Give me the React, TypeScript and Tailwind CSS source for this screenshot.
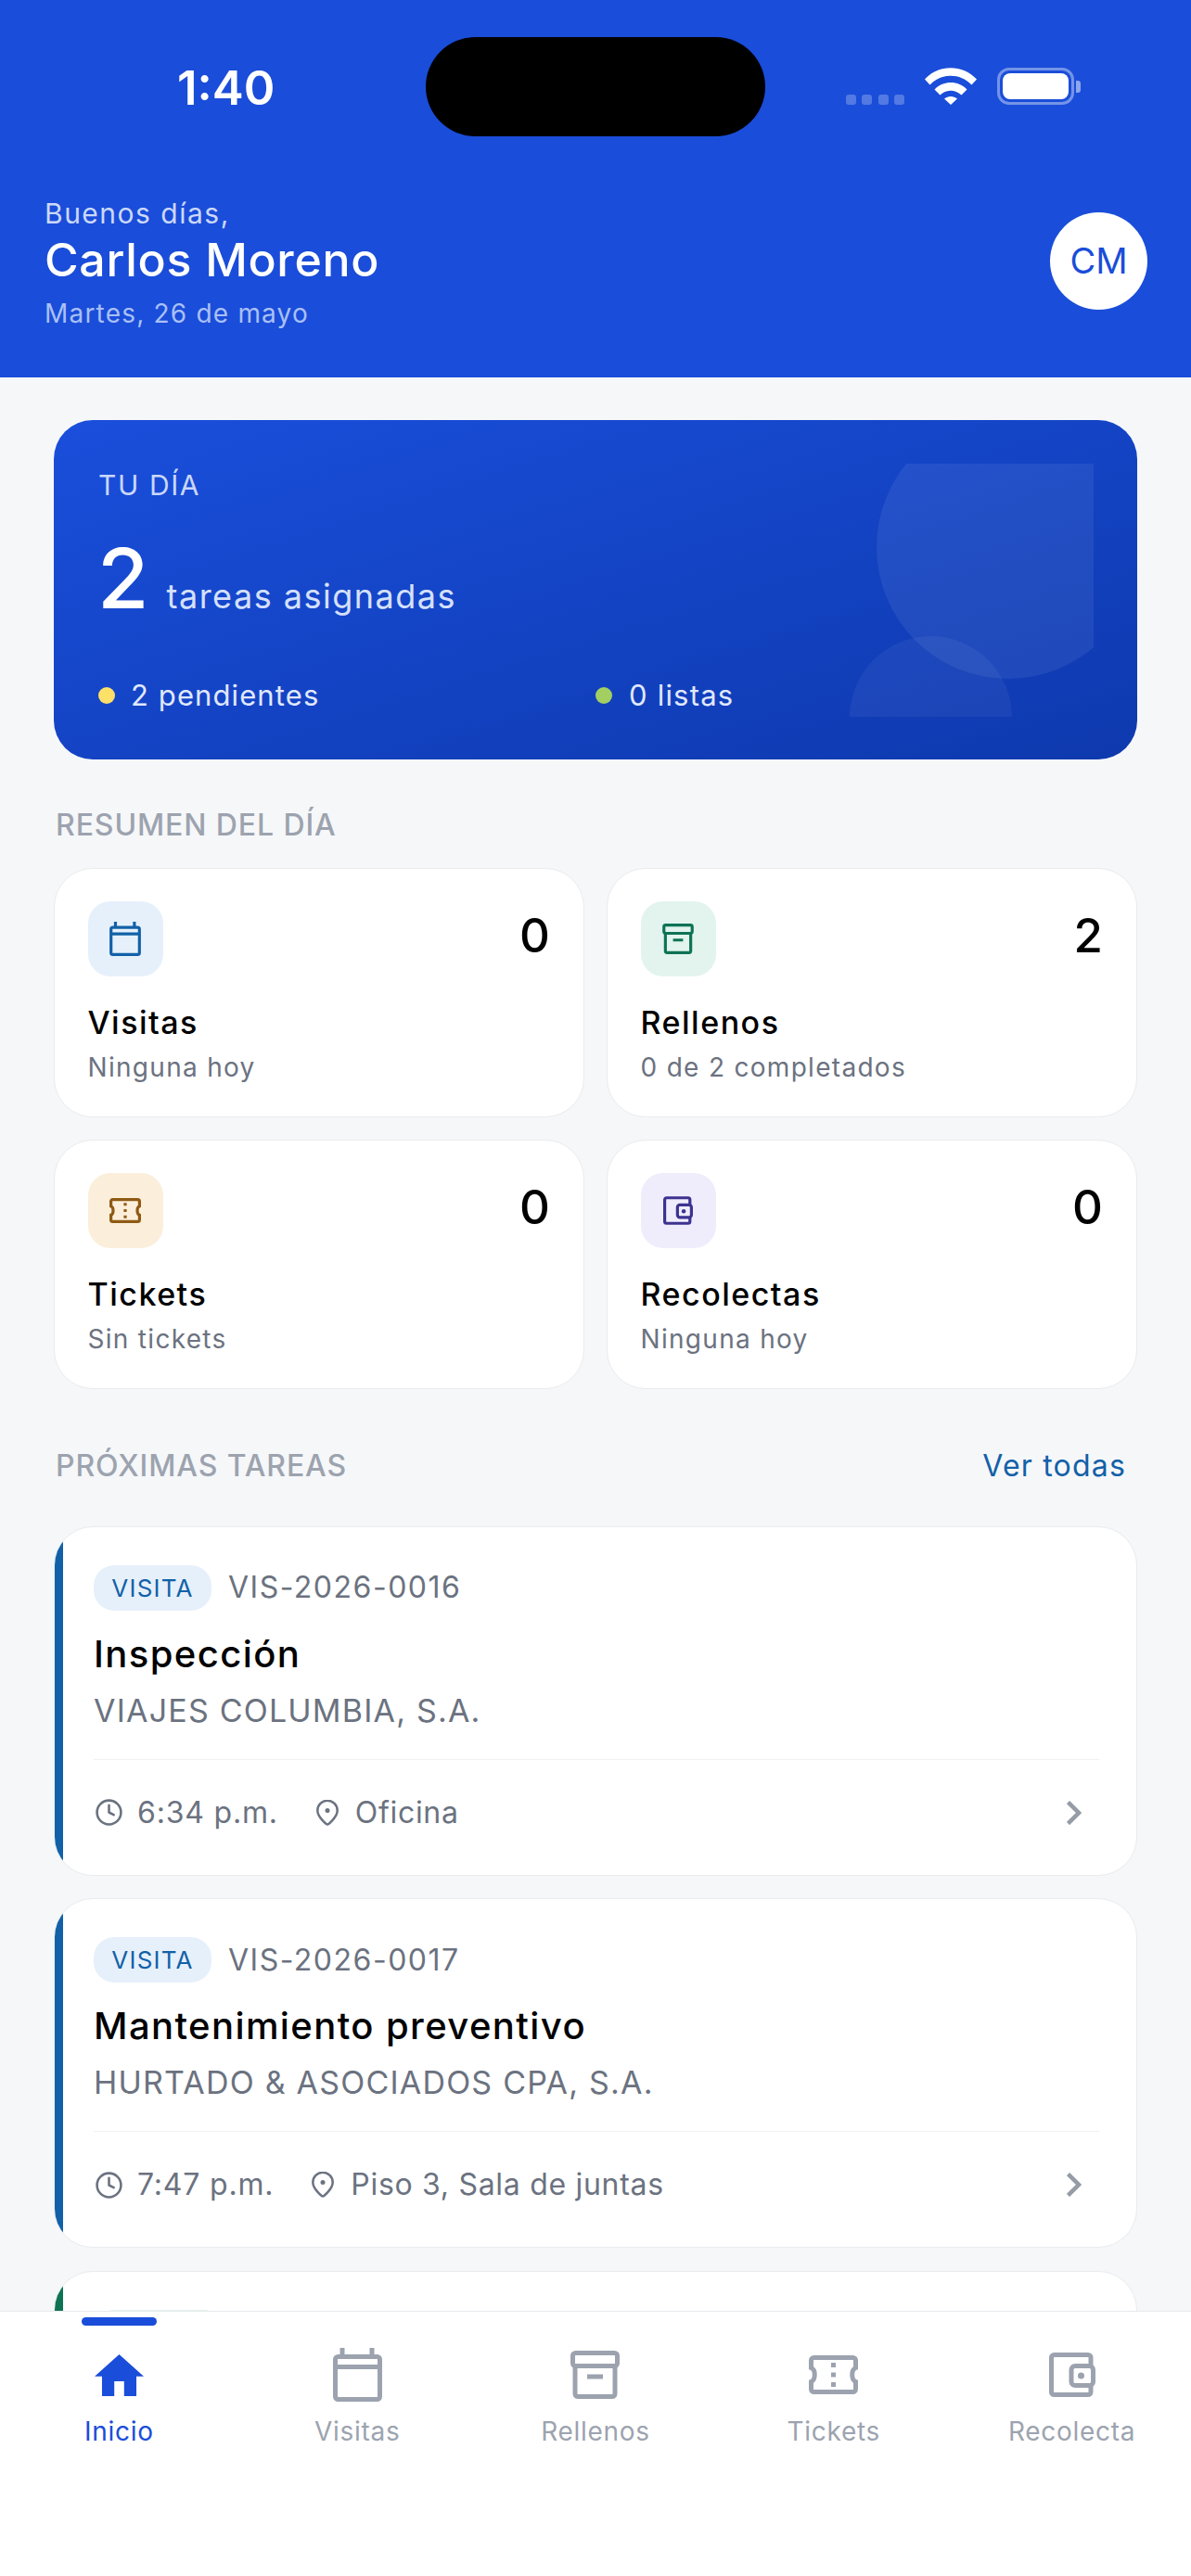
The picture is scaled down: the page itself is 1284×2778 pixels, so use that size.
import { Clock } from "lucide-react";

type IconProps = { className?: string };

function CalendarIcon({ className }: IconProps) {
  return (
    <svg viewBox="0 0 53 58" fill="none" stroke="currentColor" strokeWidth="5" className={className}>
      <rect x="2.5" y="9.5" width="48" height="46" rx="3" />
      <path d="M2.5 20.5h48M10 0v9M42 0v9" />
    </svg>
  );
}

function ArchiveIcon({ className }: IconProps) {
  return (
    <svg viewBox="0 0 53 52" fill="none" stroke="currentColor" strokeWidth="5" className={className}>
      <rect x="2.5" y="2.5" width="48" height="14" rx="3" />
      <path d="M5 16v30.5a3 3 0 0 0 3 3h37a3 3 0 0 0 3-3V16M18 28h17" />
    </svg>
  );
}

function TicketIcon({ className }: IconProps) {
  return (
    <svg viewBox="0 0 53 42" fill="none" stroke="currentColor" strokeWidth="5" className={className}>
      <path d="M5.5 2.5h42a3 3 0 0 1 3 3v8c-5 2-5 13 0 15v8a3 3 0 0 1-3 3h-42a3 3 0 0 1-3-3v-8c5-2 5-13 0-15v-8a3 3 0 0 1 3-3Z" />
      <path d="M26.5 8v5M26.5 18.5v5M26.5 29v5" />
    </svg>
  );
}

function WalletIcon({ className }: IconProps) {
  return (
    <svg viewBox="0 0 50 48" fill="none" stroke="currentColor" strokeWidth="5" className={className}>
      <path d="M45 14V5.500a3 3 0 0 0-3-3H5.500a3 3 0 0 0-3 3v37a3 3 0 0 0 3 3H42a3 3 0 0 0 3-3V36" />
      <rect x="24" y="14.500" width="23.500" height="21" rx="4" />
      <circle cx="34.500" cy="25" r="3.500" fill="currentColor" stroke="none" />
    </svg>
  );
}

function HomeIcon({ className }: IconProps) {
  return (
    <svg viewBox="2 3 20 17" fill="currentColor" className={className}>
      <path d="M10 20v-6h4v6h5v-8h3L12 3 2 12h3v8z" />
    </svg>
  );
}

function PinIcon({ className }: IconProps) {
  return (
    <svg viewBox="0 0 24 28" fill="none" stroke="currentColor" strokeWidth="2.500" className={className}>
      <path d="M12 26.500c-1 0-10.700-8-10.700-15a10.700 10.700 0 0 1 21.400 0c0 7-9.700 15-10.700 15Z" strokeLinejoin="round" />
      <circle cx="12" cy="11.500" r="2.500" fill="currentColor" stroke="none" />
    </svg>
  );
}

function ChevronIcon({ className }: IconProps) {
  return (
    <svg viewBox="0 0 16 26" fill="none" stroke="currentColor" strokeWidth="4.500" className={className}>
      <path d="M1.500 1.500L13 13L1.500 24.500" />
    </svg>
  );
}

const stats = [
  {
    title: "Visitas",
    note: "Ninguna hoy",
    count: 0,
    tile: "bg-[#e6f0fb] text-[#1261a8]",
    icon: <CalendarIcon className="w-[34px] h-[37px]" />,
  },
  {
    title: "Rellenos",
    note: "0 de 2 completados",
    count: 2,
    tile: "bg-[#e2f4ed] text-[#0e7355]",
    icon: <ArchiveIcon className="w-[34px] h-[33px]" />,
  },
  {
    title: "Tickets",
    note: "Sin tickets",
    count: 0,
    tile: "bg-[#fbefdc] text-[#8f5a14]",
    icon: <TicketIcon className="w-[34px] h-[27px]" />,
  },
  {
    title: "Recolectas",
    note: "Ninguna hoy",
    count: 0,
    tile: "bg-[#efedfc] text-[#3d3390]",
    icon: <WalletIcon className="w-[32px] h-[31px]" />,
  },
];

const tasks = [
  {
    code: "VIS-2026-0016",
    title: "Inspección",
    client: "VIAJES COLUMBIA, S.A.",
    time: "6:34 p.m.",
    place: "Oficina",
  },
  {
    code: "VIS-2026-0017",
    title: "Mantenimiento preventivo",
    client: "HURTADO & ASOCIADOS CPA, S.A.",
    time: "7:47 p.m.",
    place: "Piso 3, Sala de juntas",
  },
];

const tabs = [
  { label: "Inicio", active: true, icon: <HomeIcon className="w-[53px] h-[45px]" /> },
  { label: "Visitas", active: false, icon: <CalendarIcon className="w-[53px] h-[58px]" /> },
  { label: "Rellenos", active: false, icon: <ArchiveIcon className="w-[53px] h-[52px]" /> },
  { label: "Tickets", active: false, icon: <TicketIcon className="w-[53px] h-[42px]" /> },
  { label: "Recolecta", active: false, icon: <WalletIcon className="w-[50px] h-[48px]" /> },
];

function StatusBar() {
  return (
    <div className="h-[212px] flex justify-between items-start pl-[191px] pr-[119px] pt-[68px] shrink-0">
      <span className="text-[51px] leading-[54px] font-semibold text-white">1:40</span>
      {/* Dynamic island */}
      <div className="absolute left-[459px] top-[40px] w-[366px] h-[107px] rounded-[54px] bg-black" />
      <div className="flex items-end pt-[5px]">
        <div className="flex gap-[6.500px] mr-[22px]">
          <span className="w-[11px] h-[11px] rounded-[3px] bg-white/25" />
          <span className="w-[11px] h-[11px] rounded-[3px] bg-white/25" />
          <span className="w-[11px] h-[11px] rounded-[3px] bg-white/25" />
          <span className="w-[11px] h-[11px] rounded-[3px] bg-white/25" />
        </div>
        <svg viewBox="0 0 56 40" fill="white" className="w-[56px] h-[40px] mr-[22px]">
          <path d="M0 12.500C15-4 41-4 56 12.500L50.500 18.500C38 5.500 18 5.500 5.500 18.500Z" />
          <path d="M10.500 23.500C19.500 13.500 36.500 13.500 45.500 23.500L39.500 29.500C32.500 23 23.500 23 16.500 29.500Z" />
          <path d="M21 33.500C25 30 31 30 35 33.500L28 40Z" />
        </svg>
        <div className="flex items-center">
          <div className="w-[83px] h-[40px] rounded-[13px] border-[3px] border-white/40 p-[3px]">
            <div className="w-full h-full rounded-[8px] bg-white" />
          </div>
          <div className="w-[5px] h-[13px] ml-[2px] rounded-r-[3px] bg-white/50" />
        </div>
      </div>
    </div>
  );
}

function HeroCard() {
  return (
    <section className="relative h-[366px] rounded-[42px] bg-gradient-to-br from-[#1a4fdc] to-[#0e39ae] px-[48px] pt-[52px] overflow-hidden">
      <svg viewBox="0 0 263 273" className="absolute top-[47px] right-[47px] w-[263px] h-[273px]" fill="white">
        <circle cx="171" cy="90" r="142" fillOpacity="0.07" />
        <circle cx="87.500" cy="273.500" r="87.500" fillOpacity="0.05" />
      </svg>
      <div className="relative">
        <p className="text-[30px] leading-[36px] text-[#c9d7fa] tracking-[1.600px]">TU DÍA</p>
        <div className="flex items-baseline gap-[19px] mt-[38px] h-[90px]">
          <span className="-ml-[1px] text-[90px] leading-[90px] font-[450] text-white">2</span>
          <span className="text-[36px] leading-[44px] text-[#d5e0fb] tracking-[1.500px]">tareas asignadas</span>
        </div>
        <div className="grid grid-cols-2 mt-[63px]">
          <div className="flex items-center gap-[17px]">
            <span className="w-[18px] h-[18px] rounded-full bg-[#fde068]" />
            <span className="text-[31px] leading-[36px] text-[#e0e8fd] tracking-[1.100px]">2 pendientes</span>
          </div>
          <div className="flex items-center gap-[18px]">
            <span className="w-[18px] h-[18px] rounded-full bg-[#a3cf62]" />
            <span className="text-[31px] leading-[36px] text-[#e0e8fd] tracking-[1.200px]">0 listas</span>
          </div>
        </div>
      </div>
    </section>
  );
}

function TaskCard({ code, title, client, time, place }: (typeof tasks)[number]) {
  return (
    <article className="h-[377px] shrink-0 flex rounded-[42px] overflow-hidden bg-white border-[1.500px] border-[#e9ebee]">
      <div className="w-[9px] shrink-0 bg-[#1261a8]" />
      <div className="flex-1 min-w-0 pl-[33px] pr-[40px] pt-[41px]">
        <div className="flex items-center gap-[18px]">
          <span className="h-[49px] w-[127px] flex items-center justify-center rounded-[22px] bg-[#e6f0fb] text-[26px] text-[#1261a8] tracking-[1.200px]">
            VISITA
          </span>
          <span className="text-[32px] leading-[44px] text-[#6b7280] tracking-[1.500px]">{code}</span>
        </div>
        <h3 className="mt-[21px] text-[40px] leading-[52px] font-[450] text-black tracking-[1.400px]">{title}</h3>
        <p className="mt-[13px] text-[34px] leading-[44px] text-[#6b7280] tracking-[1.200px]">{client}</p>
        <div className="mt-[30px] border-t-[1.500px] border-[#f0f1f3] pt-[35px] flex items-center">
          <Clock className="ml-[1px] w-[31px] h-[31px] text-[#6b7280] shrink-0" strokeWidth={2} />
          <span className="ml-[15px] text-[32px] leading-[44px] text-[#6b7280] tracking-[0.800px]">{time}</span>
          <PinIcon className="ml-[41px] w-[24px] h-[28px] text-[#6b7280] shrink-0" />
          <span className="ml-[18px] text-[32px] leading-[44px] text-[#6b7280] tracking-[0.700px]">{place}</span>
          <ChevronIcon className="ml-auto mr-[19px] w-[16px] h-[26px] text-[#969ca5]" />
        </div>
      </div>
    </article>
  );
}

export default function App() {
  return (
    <div className="w-[1284px] h-[2778px] flex flex-col overflow-hidden bg-[#f6f7f9] font-['Inter',sans-serif]">
      {/* Header */}
      <header className="relative h-[407px] shrink-0 bg-[#1a4dd9]">
        <StatusBar />
        <div className="flex justify-between items-start pl-[48px] pr-[47px]">
          <div>
            <p className="text-[30px] leading-[36px] text-[#cbd8fa] tracking-[1.500px]">Buenos días,</p>
            <h1 className="mt-[2px] text-[50px] leading-[60px] font-[450] text-white tracking-[0.700px]">Carlos Moreno</h1>
            <p className="mt-[10px] text-[28px] leading-[36px] text-[#a9c0f7] tracking-[1.200px]">Martes, 26 de mayo</p>
          </div>
          <div className="mt-[17px] w-[105px] h-[105px] rounded-full bg-white flex items-center justify-center text-[38px] text-[#1a4dd9]">
            CM
          </div>
        </div>
      </header>

      {/* Content */}
      <main className="flex-1 min-h-0 overflow-hidden px-[58px] pt-[46px]">
        <HeroCard />

        <h2 className="mt-[56px] mb-[31px] pl-[2px] text-[32px] leading-[30px] font-[450] text-[#9ca3af] tracking-[0.900px]">
          RESUMEN DEL DÍA
        </h2>
        <div className="grid grid-cols-2 gap-x-[24px] gap-y-[24px]">
          {stats.map((stat) => (
            <div
              key={stat.title}
              className="h-[269px] rounded-[42px] bg-white border-[1.500px] border-[#e9ebee] pl-[35.500px] pr-[36px] pt-[34.500px]"
            >
              <div className="flex justify-between items-start">
                <div className={`w-[81px] h-[81px] rounded-[24px] flex items-center justify-center ${stat.tile}`}>
                  {stat.icon}
                </div>
                <span className="mt-[7px] text-[51px] leading-[60px] font-[450] text-black">{stat.count}</span>
              </div>
              <p className="mt-[28px] text-[34px] leading-[44px] font-[450] text-black tracking-[1.500px]">{stat.title}</p>
              <p className="mt-[7px] text-[28px] leading-[38px] text-[#6b7280] tracking-[1.300px]">{stat.note}</p>
            </div>
          ))}
        </div>

        <div className="mt-[68px] mb-[49.500px] flex justify-between items-center pl-[2px] pr-[12px]">
          <h2 className="text-[32px] leading-[30px] font-[450] text-[#9ca3af] tracking-[0.900px]">PRÓXIMAS TAREAS</h2>
          <span className="text-[32px] leading-[30px] text-[#1261a8] tracking-[1.200px]">Ver todas</span>
        </div>

        <div className="flex flex-col gap-[24.500px]">
          {tasks.map((task) => (
            <TaskCard key={task.code} {...task} />
          ))}
          {/* Third card runs under the tab bar */}
          <article className="h-[377px] shrink-0 flex rounded-[42px] overflow-hidden bg-white border-[1.500px] border-[#e9ebee]">
            <div className="w-[9px] shrink-0 bg-[#0e7355]" />
            <div className="pl-[33px] pt-[41px]">
              <span className="block h-[49px] w-[141px] rounded-[22px] bg-[#e2f4ed]" />
            </div>
          </article>
        </div>
      </main>

      {/* Tab bar */}
      <nav className="h-[286px] shrink-0 grid grid-cols-5 bg-white border-t-[1.500px] border-[#e7e9ec]">
        {tabs.map((tab) => (
          <div
            key={tab.label}
            className={`flex flex-col items-center ${tab.active ? "text-[#1a4dd9]" : "text-[#9ca3af]"}`}
          >
            <span className={`mt-[6px] h-[9px] w-[81px] rounded-full ${tab.active ? "bg-[#1a4dd9]" : ""}`} />
            <span className="mt-[21px] h-[64px] flex items-center justify-center">{tab.icon}</span>
            <span className="mt-[11px] text-[28px] leading-[36px] tracking-[0.700px]">{tab.label}</span>
          </div>
        ))}
      </nav>
    </div>
  );
}
